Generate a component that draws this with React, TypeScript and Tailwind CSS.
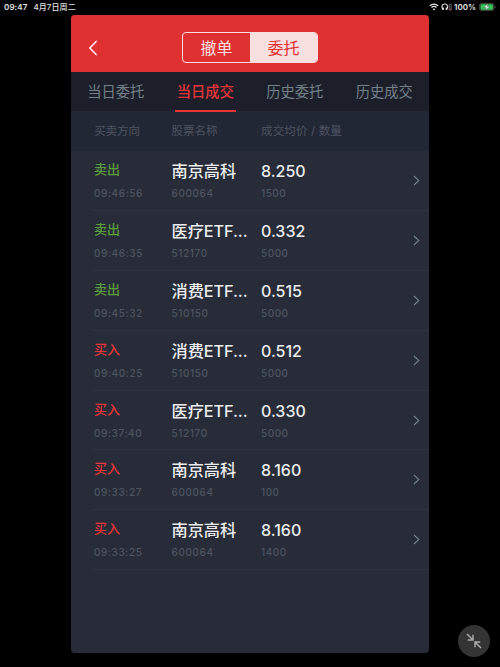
type Trade = {
    side: "buy" | "sell";
    time: string;
    name: string;
    code: string;
    price: string;
    amount: string;
};

const trades: Trade[] = [
    { side: "sell", time: "09:46:56", name: "南京高科", code: "600064", price: "8.250", amount: "1500" },
    { side: "sell", time: "09:46:35", name: "医疗ETF...", code: "512170", price: "0.332", amount: "5000" },
    { side: "sell", time: "09:45:32", name: "消费ETF...", code: "510150", price: "0.515", amount: "5000" },
    { side: "buy", time: "09:40:25", name: "消费ETF...", code: "510150", price: "0.512", amount: "5000" },
    { side: "buy", time: "09:37:40", name: "医疗ETF...", code: "512170", price: "0.330", amount: "5000" },
    { side: "buy", time: "09:33:27", name: "南京高科", code: "600064", price: "8.160", amount: "100" },
    { side: "buy", time: "09:33:25", name: "南京高科", code: "600064", price: "8.160", amount: "1400" },
];

const tabs = ["当日委托", "当日成交", "历史委托", "历史成交"];

const StatusBar = () => {
    return (
        <div className="flex h-[14px] items-center justify-between pl-1 pr-[4px] text-[8px] font-semibold leading-[14px] text-[#e4e4e4]">
            <div className="flex gap-[6px]">
                <span className="tracking-[0.1px]">09:47</span>
                <span className="font-medium tracking-[0.1px]">4月7日周二</span>
            </div>
            <div className="flex items-center">
                <svg className="h-[8px] w-[10px]" viewBox="0 0 10 8" fill="none" stroke="currentColor" strokeWidth="1.3">
                    <path d="M0.8 2.9C3.2 0.5 6.8 0.5 9.2 2.9" />
                    <path d="M2.5 4.6C4 3.2 6 3.2 7.5 4.6" />
                    <path d="M3.6 5.9C4.4 5.2 5.6 5.2 6.4 5.9L5 7.4Z" fill="currentColor" stroke="none" />
                </svg>
                <svg className="ml-[2px] h-[8px] w-[11px]" viewBox="0 0 11 8" fill="none">
                    <path d="M2 6.6C0.2 4.2 0.8 1 3.8 1S7.4 4.2 5.6 6.6" stroke="#e4e4e4" strokeWidth="1.1" />
                    <path d="M2.2 4.6V7M5.4 4.6V7" stroke="#e4e4e4" strokeWidth="1.3" />
                    <rect x="8.2" y="1.3" width="2" height="5.8" rx="0.5" stroke="#999" strokeWidth="0.7" />
                    <path d="M8.6 6.4H9.9" stroke="#e0383b" strokeWidth="1" />
                </svg>
                <span className="ml-[2px] w-[22px] whitespace-nowrap text-[8px]">100%</span>
                <svg className="ml-[3px] h-[8px] w-[17px]" viewBox="0 0 17 8">
                    <rect x="0.4" y="0.4" width="14.6" height="7.2" rx="2.2" fill="#111" stroke="#666" strokeWidth="0.7" />
                    <rect x="1.5" y="1.3" width="12.4" height="5.4" rx="1.2" fill="#35c759" />
                    <path d="M9.2 0.6L4.6 4.5H7.3L6.3 7.5L10.9 3.5H8.1Z" fill="#fff" stroke="#111" strokeWidth="0.3" />
                    <path d="M15.8 2.8C16.7 3.2 16.7 4.8 15.8 5.2Z" fill="#777" />
                </svg>
            </div>
        </div>
    );
};

const Header = () => {
    return (
        <div className="flex h-[57px] items-center bg-[#df3032] pl-[17px] pt-[9px]">
            <svg className="h-4 w-[10px]" viewBox="0 0 10 16" fill="none" stroke="#fff" strokeWidth="1.4">
                <path d="M8.7 1L1.8 8L8.7 15" />
            </svg>
            <div className="ml-[84px] flex h-[31px] w-[136px] overflow-hidden rounded-[4px] border border-[#f9e0e0] text-[16px] leading-[31px]">
                <span className="w-1/2 text-center text-[#f9e0e0]">撤单</span>
                <span className="w-1/2 bg-[#f9e0e0] text-center text-[#df3032]">委托</span>
            </div>
        </div>
    );
};

const TradeRow = ({ trade }: { trade: Trade }) => {
    return (
        <div className="ml-[21px] flex h-[59.8px] border-b border-[#2e323d] pl-[2px]">
            <div className="w-[77.5px] pt-[8px]">
                <div className={`text-[13px] font-medium leading-5 ${trade.side === "sell" ? "text-[#5c9c3a]" : "text-[#e93539]"}`}>
                    {trade.side === "sell" ? "卖出" : "买入"}
                </div>
                <div className="mt-[6px] text-[10px] font-medium leading-4 tracking-[0.6px] text-[#4e5461]">{trade.time}</div>
            </div>
            <div className="w-[89.5px] pt-[8px]">
                <div className="whitespace-nowrap text-[16.2px] font-medium leading-6 tracking-[-0.05px] text-[#ececee]">{trade.name}</div>
                <div className="mt-[2px] text-[10px] font-medium leading-4 tracking-[0.6px] text-[#4e5461]">{trade.code}</div>
            </div>
            <div className="flex-1 pt-[8px]">
                <div className="text-[16px] font-medium leading-6 text-[#ececee]">{trade.price}</div>
                <div className="mt-[2px] text-[10px] font-medium leading-4 tracking-[0.5px] text-[#4e5461]">{trade.amount}</div>
            </div>
            <svg className="mr-[9px] mt-[24px] h-[11px] w-[7px]" viewBox="0 0 7 11" fill="none" stroke="#70838e" strokeWidth="1.1">
                <path d="M1 1L5.8 5.5L1 10" />
            </svg>
        </div>
    );
};

export default function App() {
    return (
        <div className="relative h-[667px] w-[500px] overflow-hidden bg-black font-['Inter','Noto_Sans_CJK_SC',sans-serif]">
            <StatusBar />
            <div className="ml-[71px] mt-[0.5px] flex h-[638px] w-[358px] flex-col overflow-hidden rounded-[4px] bg-[#272c38]">
                <Header />
                <div className="flex h-[39.5px] bg-[#1c1f29]">
                    {tabs.map((tab, i) => (
                        <div key={tab} className="flex w-1/4 justify-center">
                            <span
                                className={`h-[40.5px] w-[61px] whitespace-nowrap text-center text-[14.3px] leading-[40px] ${
                                    i === 1 ? "relative border-b-2 border-[#e93539] font-medium text-[#e93539]" : "text-[#75818a]"
                                }`}
                            >
                                {tab}
                            </span>
                        </div>
                    ))}
                </div>
                <div className="flex h-[40.4px] bg-[#222735] pl-[23px] text-[11.5px] leading-[41px] text-[#4e5461]">
                    <span className="w-[77.5px]">买卖方向</span>
                    <span className="w-[89.5px]">股票名称</span>
                    <span className="tracking-[0.15px]">成交均价 / 数量</span>
                </div>
                {trades.map((trade) => (
                    <TradeRow key={trade.time} trade={trade} />
                ))}
            </div>
            <div className="absolute left-[458px] top-[625px] flex h-8 w-8 items-center justify-center rounded-full bg-[#343434]">
                <svg className="h-4 w-4" viewBox="0 0 16 16" fill="none" stroke="#a9a9a9" strokeWidth="1.5">
                    <path d="M1 1L6.5 6.5M7 1.7V7H1.7" />
                    <path d="M15 15L9.5 9.5M9 14.3V9H14.3" />
                </svg>
            </div>
        </div>
    );
}
